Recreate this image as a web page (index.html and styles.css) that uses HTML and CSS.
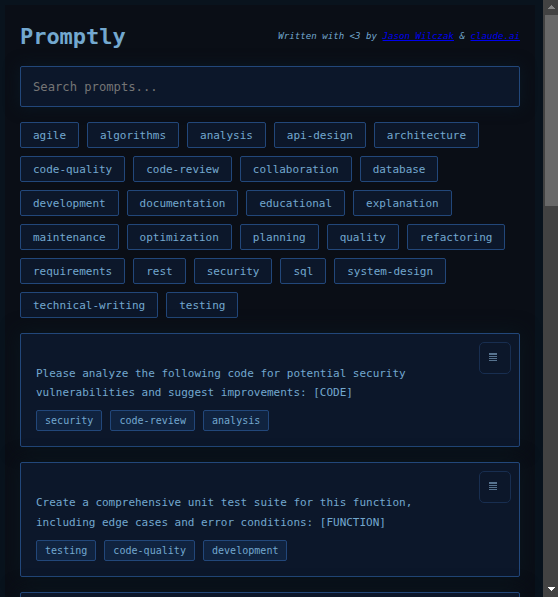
FILE: index.html
```
<!DOCTYPE html>
<html lang="en">
<head>
<meta charset="utf-8">
<title>Promptly</title>
<link rel="stylesheet" href="styles.css">
</head>
<body>
<div class="viewport">
  <div class="page">
    <main class="container">
      <header class="header">
        <h1 class="title">Promptly</h1>
        <div class="credit">Written with &lt;3 by <a href="#">Jason Wilczak</a> &amp; <a href="#">claude.ai</a></div>
      </header>
      <input class="search" type="text" placeholder="Search prompts...">
      <div class="filters">
        <span class="filter">agile</span><span class="filter">algorithms</span><span class="filter">analysis</span><span class="filter">api-design</span><span class="filter">architecture</span><span class="filter">code-quality</span><span class="filter">code-review</span><span class="filter">collaboration</span><span class="filter">database</span><span class="filter">development</span><span class="filter">documentation</span><span class="filter">educational</span><span class="filter">explanation</span><span class="filter">maintenance</span><span class="filter">optimization</span><span class="filter">planning</span><span class="filter">quality</span><span class="filter">refactoring</span><span class="filter">requirements</span><span class="filter">rest</span><span class="filter">security</span><span class="filter">sql</span><span class="filter">system-design</span><span class="filter">technical-writing</span><span class="filter">testing</span>
      </div>
      <section class="cards">
        <article class="card">
          <button class="copy" aria-label="Copy"><svg width="8" height="9" viewBox="0 0 8 9"><path d="M0 0h8v2H0zM0 3h8v1H0zM0 5h8v1H0zM0 7h8v1H0z"/></svg></button>
          <p class="text">Please analyze the following code for potential security<br>vulnerabilities and suggest improvements: [CODE]</p>
          <div class="tags"><span class="tag">security</span><span class="tag">code-review</span><span class="tag">analysis</span></div>
        </article>
        <article class="card">
          <button class="copy" aria-label="Copy"><svg width="8" height="9" viewBox="0 0 8 9"><path d="M0 0h8v2H0zM0 3h8v1H0zM0 5h8v1H0zM0 7h8v1H0z"/></svg></button>
          <p class="text">Create a comprehensive unit test suite for this function,<br>including edge cases and error conditions: [FUNCTION]</p>
          <div class="tags"><span class="tag">testing</span><span class="tag">code-quality</span><span class="tag">development</span></div>
        </article>
        <article class="card"></article>
      </section>
    </main>
  </div>
  <div class="scrollbar">
    <svg class="arrow" width="15" height="15" viewBox="0 0 15 15" shape-rendering="crispEdges"><path fill="#868686" d="M8 5h1v1H8zM7 6h3v1H7zM6 7h5v1H6zM5 8h7v1H5z"/></svg>
    <div class="thumb"></div>
    <svg class="arrow arrow-down" width="15" height="15" viewBox="0 0 15 15" shape-rendering="crispEdges"><path fill="#fff" d="M5 5h7v1H5zM6 6h5v1H6zM7 7h3v1H7zM8 8h1v1H8z"/></svg>
  </div>
</div>
</body>
</html>
```
FILE: styles.css
```
* { box-sizing: border-box; }

body {
  margin: 0;
  overflow: hidden;
  background: #0a0e17;
  color: #73a8cf;
  font-family: Consolas, "DejaVu Sans Mono", monospace;
}

.viewport {
  display: flex;
  height: 597px;
  overflow: hidden;
}

.page {
  width: 543px;
  padding: 5px 8px 0 5px;
  background: #09131d;
  overflow: hidden;
}

.container {
  height: 1200px;
  padding: 15px 15px 0;
  background: #0a0e16;
}

.header {
  display: flex;
  justify-content: space-between;
  align-items: center;
  height: 31px;
  margin-bottom: 15px;
}

.title {
  margin: 0;
  padding-top: 2px;
  font-size: 22px;
  letter-spacing: -0.04px;
  line-height: 31px;
}

.credit {
  font-size: 9.1px;
  letter-spacing: 0.02px;
  font-style: italic;
  white-space: nowrap;
}

.credit a { color: #0000ee; text-decoration: underline; }

.search {
  display: block;
  width: 100%;
  height: 41px;
  margin: 0 0 15px;
  padding: 1px 12px 0;
  border: 1px solid #22477a;
  border-radius: 2px;
  background: #0c172a;
  box-shadow: 0 0 15px #0a1824;
  font-family: inherit;
  font-size: 12.2px;
  letter-spacing: -0.01px;
}

.search::placeholder { color: #757575; }

.filters {
  display: flex;
  flex-wrap: wrap;
  gap: 8px;
  margin-bottom: 15px;
}

.filter {
  height: 26px;
  padding: 1px 12px 0;
  border: 1px solid #22477a;
  border-radius: 2px;
  background: #0c172a;
  font-size: 11px;
  letter-spacing: -0.022px;
  line-height: 24px;
}

.card {
  position: relative;
  height: 114.4px;
  margin-bottom: 15px;
  padding: 30px 15px 15px;
  border: 1px solid #22477a;
  border-radius: 2px;
  background: #0c172a;
  box-shadow: 0 0 20px #0a171f;
}

.text {
  margin: 0 0 7.8px;
  font-size: 11px;
  letter-spacing: -0.022px;
  line-height: 19.2px;
  white-space: nowrap;
}

.tags { display: flex; gap: 8px; }

.tag {
  height: 21px;
  padding: 0 8px;
  border: 1px solid #22477a;
  border-radius: 2px;
  background: #10233f;
  font-size: 10.05px;
  line-height: 19px;
}

.copy {
  position: absolute;
  top: 8px;
  right: 8px;
  display: flex;
  align-items: flex-start;
  width: 32px;
  height: 32px;
  padding: 10px 9px;
  border: 1px solid #182e50;
  border-radius: 5px;
  background: #0c172a;
}

.copy svg { display: block; fill: #57738f; }

.scrollbar {
  display: flex;
  flex-direction: column;
  width: 15px;
  background: #424242;
}

.arrow { display: block; }

.thumb {
  height: 191px;
  margin-left: 2px;
  background: #686868;
}

.arrow-down { margin-top: auto; }
```
